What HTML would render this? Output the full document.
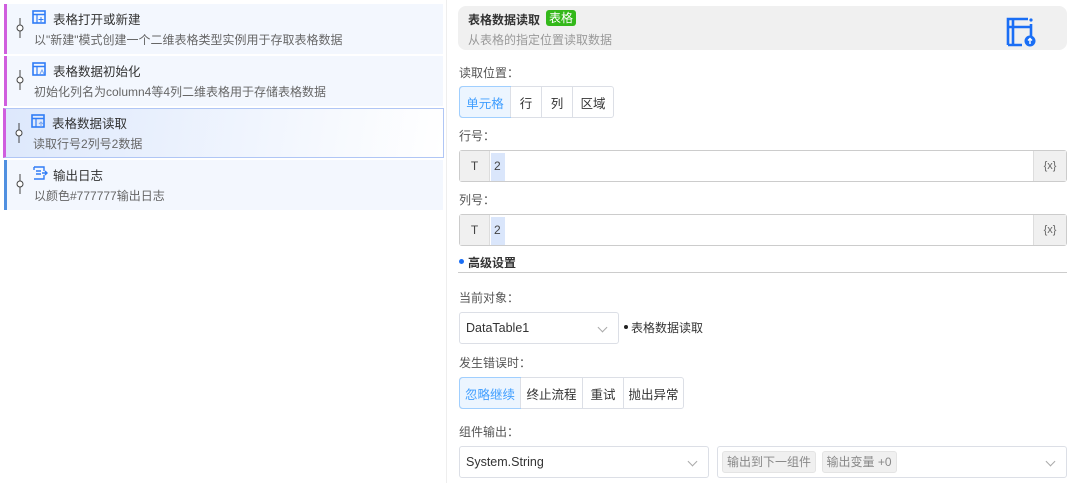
<!DOCTYPE html>
<html><head><meta charset="utf-8"><style>
*{box-sizing:border-box;margin:0;padding:0}
body{width:1072px;height:483px;background:#fff;font-family:"Liberation Sans","Noto Sans CJK SC",sans-serif;font-size:12px;color:#333;position:relative;overflow:hidden}
.abs{position:absolute}
.card{position:absolute;left:4px;width:439px;height:50px;background:#f3f7fe;border-left:3px solid #d05ede}
.card .t{position:absolute;left:46px;top:5px;font-size:12.5px;color:#333}
.card .d{position:absolute;left:27px;top:27px;font-size:12px;color:#666}
.card .ic{position:absolute;left:25px;top:6px}
.card .pin{position:absolute;left:8px;top:14px}
.lbl{position:absolute;left:459px;font-size:12px;color:#555}
.seg{position:absolute;display:flex;border:1px solid #dcdfe6;border-radius:3px;height:32px;background:#fff}
.seg div{flex:none;display:flex;align-items:center;justify-content:center;border-left:1px solid #dcdfe6;font-size:12.5px;color:#333}
.seg div:first-child{border-left:none;background:#ecf5ff;color:#409eff;outline:1px solid #a0cfff;border-radius:3px 0 0 3px}
.inp{position:absolute;left:459px;width:608px;height:32px;border:1px solid #ccc;border-radius:3px;background:#fff}
.inp .T{position:absolute;left:0;top:0;width:30px;height:30px;background:#f0f0f0;border-right:1px solid #ddd;display:flex;align-items:center;justify-content:center;color:#444}
.inp .v{position:absolute;left:31px;top:2px;width:14px;height:28px;background:#dae6fb;color:#444;padding-left:3px;line-height:27px}
.inp .x{position:absolute;right:0;top:0;width:33px;height:30px;background:#f0f0f0;border-left:1px solid #ddd;display:flex;align-items:center;justify-content:center;color:#666;font-size:11px}
.sel{position:absolute;height:32px;border:1px solid #dcdfe6;border-radius:3px;background:#fff;padding-left:6px;line-height:30px;font-size:12.5px;color:#333}
.chev{position:absolute;right:12px;top:11px;width:7px;height:7px;border-right:1px solid #aaa;border-bottom:1px solid #aaa;transform:rotate(45deg)}
</style></head><body>
<div class="abs" style="left:446px;top:0;width:1px;height:483px;background:#eee"></div>

<div class="card" style="top:4px"><svg class="pin" width="10" height="20"><line x1="5" y1="0" x2="5" y2="20" stroke="#444"/><circle cx="5" cy="10" r="3" fill="#fff" stroke="#444"/></svg>
<svg class="ic" width="14" height="14"><rect x="1" y="1" width="12" height="12" fill="none" stroke="#2f7cf6" stroke-width="1.6"/><line x1="1" y1="4.5" x2="13" y2="4.5" stroke="#2f7cf6" stroke-width="1.5"/><line x1="5" y1="4" x2="5" y2="13" stroke="#2f7cf6" stroke-width="1.2"/><path d="M9 7v5M6.5 9.5h5" stroke="#2f7cf6"/></svg>
<div class="t">表格打开或新建</div><div class="d">以"新建"模式创建一个二维表格类型实例用于存取表格数据</div></div>

<div class="card" style="top:56px"><svg class="pin" width="10" height="20"><line x1="5" y1="0" x2="5" y2="20" stroke="#444"/><circle cx="5" cy="10" r="3" fill="#fff" stroke="#444"/></svg>
<svg class="ic" width="14" height="14"><rect x="1" y="1" width="12" height="12" fill="none" stroke="#2f7cf6" stroke-width="1.6"/><line x1="1" y1="4.5" x2="13" y2="4.5" stroke="#2f7cf6" stroke-width="1.5"/><line x1="5" y1="4" x2="5" y2="13" stroke="#2f7cf6" stroke-width="1.2"/><path d="M8 12l2-4 2 4" stroke="#7aa6f0" fill="none"/></svg>
<div class="t">表格数据初始化</div><div class="d">初始化列名为column4等4列二维表格用于存储表格数据</div></div>

<div class="card" style="top:108px;background:linear-gradient(100deg,#dde8fc,#fff);border:1px solid #b0c6f5;border-left:3px solid #d05ede;height:50px;left:3px;width:441px"><svg class="pin" width="10" height="20"><line x1="5" y1="0" x2="5" y2="20" stroke="#444"/><circle cx="5" cy="10" r="3" fill="#fff" stroke="#444"/></svg>
<svg class="ic" width="14" height="14" style="left:25px;top:5px"><rect x="1" y="1" width="12" height="12" fill="none" stroke="#2f7cf6" stroke-width="1.6"/><line x1="1" y1="4.5" x2="13" y2="4.5" stroke="#2f7cf6" stroke-width="1.5"/><line x1="5" y1="4" x2="5" y2="13" stroke="#2f7cf6" stroke-width="1.2"/><path d="M10 13v-4M8 10l2-2 2 2" stroke="#7aa6f0" fill="none"/></svg>
<div class="t" style="top:4px">表格数据读取</div><div class="d" style="top:26px">读取行号2列号2数据</div></div>

<div class="card" style="top:160px;border-left-color:#4f8fe0"><svg class="pin" width="10" height="20"><line x1="5" y1="0" x2="5" y2="20" stroke="#444"/><circle cx="5" cy="10" r="3" fill="#fff" stroke="#444"/></svg>
<svg class="ic" width="16" height="14"><path d="M2 1h10v4M2 1v3M2 13h10v-4M4 5h5M4 8h5M10 7h5M13 5l2 2-2 2" stroke="#2f7cf6" fill="none" stroke-width="1.4"/></svg>
<div class="t">输出日志</div><div class="d">以颜色#777777输出日志</div></div>

<div class="abs" style="left:458px;top:6px;width:609px;height:44px;background:#f0f0f0;border-radius:8px">
<div class="abs" style="left:10px;top:5px;font-weight:bold;font-size:12px;color:#333">表格数据读取</div>
<div class="abs" style="left:88px;top:4px;background:#33b81a;color:#fff;border-radius:3px;padding:0 3px;font-size:12px;line-height:16px">表格</div>
<div class="abs" style="left:10px;top:25px;color:#999;font-size:12px">从表格的指定位置读取数据</div>
<svg class="abs" style="left:547px;top:10px" width="32" height="32"><path d="M3 29V3H23M3 29H17M8 4V29M3 11H26M26 8V20" stroke="#1a6ef5" stroke-width="2.6" fill="none"/><circle cx="26" cy="4" r="1.6" fill="#1a6ef5"/><circle cx="25" cy="25" r="5.5" fill="#1a6ef5"/><path d="M25 28v-5M23 24.5l2-2 2 2" stroke="#fff" stroke-width="1.4" fill="none"/></svg>
</div>

<div class="lbl" style="top:64px">读取位置：</div>
<div class="seg" style="left:459px;top:86px;width:155px"><div style="width:50px">单元格</div><div style="width:31px">行</div><div style="width:31px">列</div><div style="width:41px">区域</div></div>

<div class="lbl" style="top:127px">行号：</div>
<div class="inp" style="top:150px"><div class="T">T</div><div class="v">2</div><div class="x">{x}</div></div>
<div class="lbl" style="top:191px">列号：</div>
<div class="inp" style="top:214px"><div class="T">T</div><div class="v">2</div><div class="x">{x}</div></div>

<div class="abs" style="left:459px;top:259px;width:5px;height:5px;border-radius:50%;background:#1a6ef5"></div>
<div class="abs" style="left:468px;top:254px;font-weight:bold;color:#333">高级设置</div>
<div class="abs" style="left:458px;top:272px;width:609px;height:1px;background:#ccc"></div>

<div class="lbl" style="top:289px">当前对象：</div>
<div class="sel" style="left:459px;top:312px;width:160px">DataTable1<span class="chev"></span></div>
<div class="abs" style="left:624px;top:325px;width:4px;height:4px;border-radius:50%;background:#222"></div>
<div class="abs" style="left:631px;top:319px;color:#333">表格数据读取</div>

<div class="lbl" style="top:354px">发生错误时：</div>
<div class="seg" style="left:459px;top:377px;width:225px"><div style="width:60px">忽略继续</div><div style="width:62px">终止流程</div><div style="width:41px">重试</div><div style="width:60px">抛出异常</div></div>

<div class="lbl" style="top:423px">组件输出：</div>
<div class="sel" style="left:459px;top:446px;width:250px">System.String<span class="chev"></span></div>
<div class="sel" style="left:717px;top:446px;width:350px;padding-left:4px">
<span style="display:inline-block;background:#f0f0f0;border-radius:3px;padding:0 4px;line-height:20px;color:#888;font-size:12px;border:1px solid #e4e4e4">输出到下一组件</span>
<span style="display:inline-block;background:#f0f0f0;border-radius:3px;padding:0 4px;line-height:20px;color:#888;font-size:12px;border:1px solid #e4e4e4;margin-left:2px">输出变量 +0</span><span class="chev"></span></div>
</body></html>
